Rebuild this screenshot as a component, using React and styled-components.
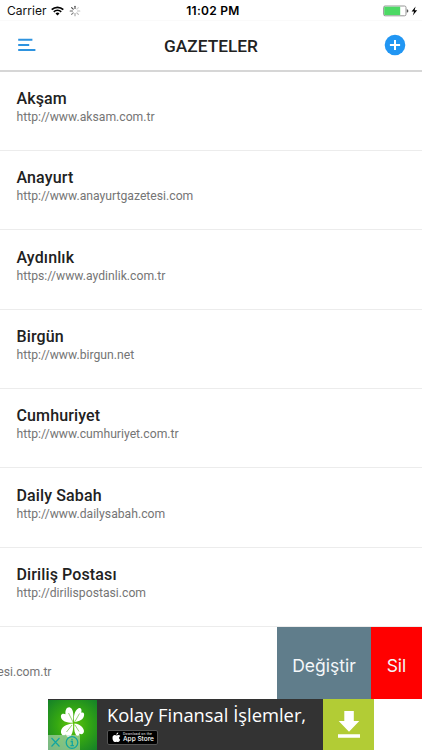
import React from 'react';
import styled, { createGlobalStyle } from 'styled-components';

const GlobalStyle = createGlobalStyle`
  * { box-sizing: border-box; }
  body { margin: 0; background: #fff; }
`;

const Screen = styled.main`
  position: relative;
  display: flex;
  flex-direction: column;
  width: 422px;
  height: 750px;
  overflow: hidden;
  background: #fff;
  font-family: Roboto, sans-serif;
`;

const StatusBar = styled.div`
  display: grid;
  grid-template-columns: 1fr auto 1fr;
  align-items: center;
  height: 21px;
  padding: 1px 4px 0 7px;
  font-family: Inter, sans-serif;
  font-size: 12px;
  line-height: 20px;
  color: #111;
  border-bottom: 1px solid #fafafa;
`;

const StatusGroup = styled.div`
  display: flex;
  align-items: center;
  justify-content: ${(p) => (p.$end ? 'flex-end' : 'flex-start')};
`;

const Carrier = styled.span`
  width: 44px;
  letter-spacing: 0.05px;
  white-space: nowrap;
`;

const Clock = styled.time`
  padding-left: 1px;
  font-weight: 600;
  font-size: 12px;
  letter-spacing: 0.28px;
  color: #000;
  white-space: nowrap;
`;

const Header = styled.header`
  display: grid;
  grid-template-columns: 50px 1fr 50px;
  align-items: center;
  height: 51px;
  padding: 0 2px 1px;
  border-bottom: 2px solid #d6d6d6;
`;

const Heading = styled.h1`
  margin: 0;
  padding-top: 3px;
  text-align: center;
  font-size: 17.3px;
  font-weight: 500;
  line-height: 22px;
  color: #222;
`;

const IconButton = styled.button`
  display: flex;
  align-items: center;
  justify-content: center;
  width: 50px;
  height: 44px;
  padding: 0;
  border: 0;
  background: none;
`;

const List = styled.ul`
  margin: 0;
  padding: 0;
  list-style: none;
`;

const Item = styled.li`
  height: 79.4px;
  padding: 16.4px 16.5px 0;
  border-bottom: 1px solid #ececec;

  &:first-child {
    height: 79px;
    padding-top: 16.6px;
  }
`;

const Name = styled.h2`
  margin: 0;
  font-size: 16px;
  font-weight: 500;
  line-height: 21px;
  color: #212121;
  letter-spacing: 0.12px;
`;

const Url = styled.p`
  margin: 0;
  font-size: 12.2px;
  line-height: 16px;
  color: #757575;
  white-space: nowrap;
`;

const SwipedRow = styled.section`
  display: flex;
  justify-content: space-between;
  height: 72px;
`;

const SwipedContent = styled.div`
  display: flex;
  justify-content: flex-end;
  width: 51.5px;
  padding-top: 37px;
`;

const Actions = styled.div`
  display: flex;
`;

const Action = styled.button`
  width: ${(p) => p.$width}px;
  padding: 5px 0 0;
  border: 0;
  background: ${(p) => p.$color};
  color: #f4f7f9;
  font-family: Inter, sans-serif;
  font-size: 17.5px;
`;

const Banner = styled.aside`
  display: flex;
  width: 326px;
  height: 51px;
  margin-left: 48px;
  background: #333;
`;

const AdLogo = styled.div`
  position: relative;
  width: 49px;
  height: 50px;
  margin-top: 1px;
  background: radial-gradient(circle at 50% 50%, #64c70c 0, #35a812 45%, #148029 100%);
`;

const AdBadge = styled.div`
  position: absolute;
  left: 0;
  bottom: 0;
  display: flex;
  width: 32px;
  height: 15px;
  background: rgba(190, 220, 195, 0.6);
`;

const AdText = styled.div`
  flex: 1;
  padding: 3px 0 0 10px;
`;

const AdTitle = styled.div`
  height: 28px;
  font-family: 'Open Sans', sans-serif;
  font-size: 18.35px;
  line-height: 25px;
  color: #fff;
  white-space: nowrap;
`;

const StoreBadge = styled.div`
  display: flex;
  align-items: center;
  gap: 2px;
  width: 51px;
  height: 15px;
  padding-left: 4px;
  border: 1px solid #555;
  border-radius: 2px;
  background: #000;
  color: #fff;
`;

const StoreCopy = styled.div`
  display: flex;
  flex-direction: column;
  font-family: Inter, sans-serif;
  white-space: nowrap;
`;

const StoreSmall = styled.span`
  font-size: 3.2px;
  line-height: 4px;
  letter-spacing: 0.25px;
`;

const StoreLarge = styled.span`
  font-size: 6.5px;
  font-weight: 500;
  line-height: 7px;
`;

const Download = styled.div`
  display: flex;
  justify-content: center;
  width: 51px;
  height: 51px;
  padding-top: 12px;
  background: #b2cc35;
`;

const papers = [
  { name: 'Akşam', url: 'http://www.aksam.com.tr' },
  { name: 'Anayurt', url: 'http://www.anayurtgazetesi.com' },
  { name: 'Aydınlık', url: 'https://www.aydinlik.com.tr' },
  { name: 'Birgün', url: 'http://www.birgun.net' },
  { name: 'Cumhuriyet', url: 'http://www.cumhuriyet.com.tr' },
  { name: 'Daily Sabah', url: 'http://www.dailysabah.com' },
  { name: 'Diriliş Postası', url: 'http://dirilispostasi.com' },
];

const spokes = [0.9, 0.2, 0.3, 0.35, 0.45, 0.6, 0.75, 0.9];

const WifiIcon = () => (
  <svg width="13" height="10" viewBox="0 0 13 10">
    <g fill="none" stroke="#000" strokeWidth="1.7">
      <path d="M.7 3.7a8.2 8.2 0 0 1 11.6 0" />
      <path d="M2.8 5.8a5.2 5.2 0 0 1 7.4 0" />
    </g>
    <path d="M4.5 7.4a2.9 2.9 0 0 1 4 0l-2 2z" />
  </svg>
);

const Spinner = () => (
  <svg width="12" height="12" viewBox="-6 -6 12 12">
    {spokes.map((o, i) => (
      <path key={i} d="M0-2.5V-4.8" stroke="#333" strokeWidth="1.1" strokeLinecap="round" opacity={o} transform={`rotate(${i * 45})`} />
    ))}
  </svg>
);

const StatusGap = styled.span`
  width: ${(p) => p.$w}px;
`;

const BatteryIcon = () => (
  <svg width="35" height="12" viewBox="0 0 35 12">
    <rect x=".6" y="1" width="22.4" height="9.8" rx="1.5" fill="#fff" stroke="#8b8b8b" strokeWidth=".9" />
    <path d="M1.2 1.7h16v8.4h-16z" fill="#4cd964" />
    <path d="M23.8 4.2q1.6.2 1.6 1.7t-1.6 1.7z" fill="#555" />
    <path d="M32.6 1.4 28.6 6.5h2.5l-1.3 4.1 4.4-5.3h-2.6z" fill="#000" />
  </svg>
);

const MenuIcon = () => (
  <svg width="18" height="14" viewBox="0 0 18 14">
    <path d="M.2 1.7h14.2M.2 6.9h11M.2 12.1h17.2" stroke="#2e93df" strokeWidth="2" />
  </svg>
);

const AddIcon = () => (
  <svg width="22" height="22" viewBox="0 0 22 22">
    <circle cx="11" cy="11" r="10.3" fill="#2196f3" />
    <path d="M11 5.9v10.2M5.9 11h10.2" stroke="#fff" strokeWidth="2" />
  </svg>
);

const CloverIcon = () => (
  <svg width="49" height="50" viewBox="0 0 49 50">
    <g fill="#fff">
      <path d="M25 22.500C18 23.500 12 20 13 15.500c.5-2 2.500-2.300 4.500-1.300-.5-4.500 1.500-7.500 4.500-6.700 4 1.500 3.500 9 3 15Z" />
      <path d="M26.500 22c-1.500-5 .2-12 4-13.800 3-.8 3.500 2 2.700 4.600 2.500-1 3.300.7 2.800 3-.6 3.500-4.500 5.900-9.500 6.200Z" />
      <path d="M25 23.500c-7 .5-12.500 4-12 9 .5 3 3 4 5 2 .5 3 3.500 3.500 5 1 2-3 2.500-7.500 2-12Z" />
      <path d="M26.500 23.500c5 .5 9 3.500 9.500 7.500 0 3-2.500 4-4.500 2.500 0 3-2.500 3.500-4 .5-1.500-3-1.500-6.500-1-10.500Z" />
    </g>
    <path d="M25 22 20.500 13M27 21.500l4.500-8M24 25l-5.500 7M27 25l4 6.500" stroke="#6abf3c" strokeWidth=".7" />
  </svg>
);

const AdChoicesIcon = () => (
  <svg width="32" height="15" viewBox="0 0 32 15">
    <path d="M3.500 3l8 8.500M11.500 3l-8 8.500" stroke="#12a5a0" strokeWidth="1.2" />
    <path d="M16 0v15" stroke="#7dbd97" strokeWidth=".7" />
    <circle cx="24" cy="7.500" r="5.800" fill="none" stroke="#12a5a0" strokeWidth="1.300" />
    <path d="M24 3.700v1.500M22.600 6.500H24.300v4.200M22.400 10.700h3.500" fill="none" stroke="#12a5a0" strokeWidth="1.300" />
  </svg>
);

const AppleIcon = () => (
  <svg width="9" height="11" viewBox="0 0 18 22">
    <path fill="#fff" d="M12.500 1c.2 2-1.600 4.300-3.800 4.300C8.400 3.300 10.300 1.300 12.500 1ZM16.500 15.500c-1 2.200-2.400 4.600-4.200 4.600-1.200 0-1.800-.8-3.200-.8s-2 .8-3.200.8C3.200 20.100 1 15.600 1 11.800 1 8.300 3.200 6.200 5.500 6.200c1.500 0 2.700 1 3.700 1 1 0 2.400-1 4.200-1 1.100 0 2.400.6 3.200 1.700-3.600 2-3 6.500-.1 7.600Z" />
  </svg>
);

const DownloadIcon = () => (
  <svg width="24" height="28" viewBox="0 0 24 28">
    <path d="M7.300 0h9.500v10h5.500L12 20.800 1.700 10h5.600zM1 23.200h22v3.500H1z" fill="#fff" />
  </svg>
);

export default function App() {
  return (
    <>
      <GlobalStyle />
      <Screen>
        <StatusBar>
          <StatusGroup>
            <Carrier>Carrier</Carrier>
            <WifiIcon />
            <StatusGap $w={5} />
            <Spinner />
          </StatusGroup>
          <Clock>11:02 PM</Clock>
          <StatusGroup $end>
            <BatteryIcon />
          </StatusGroup>
        </StatusBar>
        <Header>
          <IconButton aria-label="Menü"><MenuIcon /></IconButton>
          <Heading>GAZETELER</Heading>
          <IconButton aria-label="Ekle"><AddIcon /></IconButton>
        </Header>
        <List>
          {papers.map((paper) => (
            <Item key={paper.name}>
              <Name>{paper.name}</Name>
              <Url>{paper.url}</Url>
            </Item>
          ))}
        </List>
        <SwipedRow>
          <SwipedContent><Url>esi.com.tr</Url></SwipedContent>
          <Actions>
            <Action $width={94} $color="#607d8b">Değiştir</Action>
            <Action $width={51} $color="#ff0000">Sil</Action>
          </Actions>
        </SwipedRow>
        <Banner>
          <AdLogo>
            <CloverIcon />
            <AdBadge><AdChoicesIcon /></AdBadge>
          </AdLogo>
          <AdText>
            <AdTitle>Kolay Finansal İşlemler,</AdTitle>
            <StoreBadge>
              <AppleIcon />
              <StoreCopy>
                <StoreSmall>Download on the</StoreSmall>
                <StoreLarge>App Store</StoreLarge>
              </StoreCopy>
            </StoreBadge>
          </AdText>
          <Download><DownloadIcon /></Download>
        </Banner>
      </Screen>
    </>
  );
}
